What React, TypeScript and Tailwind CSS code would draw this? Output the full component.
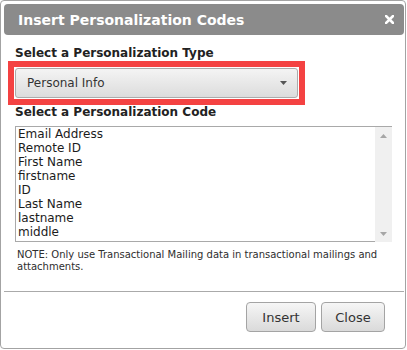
const codes = [
  "Email Address",
  "Remote ID",
  "First Name",
  "firstname",
  "ID",
  "Last Name",
  "lastname",
  "middle",
];

function Caret({ className }: { className: string }) {
  return (
    <svg width="7" height="4" viewBox="0 0 7 4" className={className} aria-hidden="true">
      <polygon points="0,0 7,0 3.5,4" fill="currentColor" />
    </svg>
  );
}

function Boton({ children, width }: { children: string; width: string }) {
  return (
    <button
      type="button"
      className={`${width} h-[30px] rounded-[4px] border border-[#a4a4a4] bg-gradient-to-b from-[#f6f6f6] to-[#dadada] text-[13px] leading-none text-[#333]`}
    >
      {children}
    </button>
  );
}

export default function App() {
  return (
    <div className="h-[350px] w-[407px] bg-white font-['DejaVu_Sans',Verdana,sans-serif]">
      <div className="flex h-[349px] w-[406px] flex-col rounded-[4px] border border-[#a3a3a3] pl-[3px] pr-[1px] pt-[3px]">
        {/* barra de título */}
        <div className="flex h-[31px] items-center justify-between rounded-[4px] bg-[#8b8b8b] pl-[14px] pr-[10px]">
          <h1 className="text-[14px] font-bold leading-none text-white">Insert Personalization Codes</h1>
          <svg width="9" height="9" viewBox="0 0 9 9" aria-hidden="true">
            <path d="M1 1 L8 8 M8 1 L1 8" stroke="white" strokeWidth="2.6" strokeLinecap="square" />
          </svg>
        </div>

        <div className="flex flex-col pl-[11px] pr-[10px] pt-[11px]">
          <p className="text-[12px] font-bold leading-[14px] text-[#222]">Select a Personalization Type</p>

          {/* marco rojo de resaltado */}
          <div className="-ml-[7px] mt-[1px] w-[297px] border-[6px] border-[#f44242] p-[1px]">
            <div className="flex h-[30px] items-center justify-between rounded-[3px] border border-[#ababab] bg-gradient-to-b from-[#f4f4f4] to-[#dcdcdc] pl-[11px] pr-[10px] text-[12px] text-[#333]">
              <span>Personal Info</span>
              <Caret className="text-[#555]" />
            </div>
          </div>

          <p className="text-[12px] font-bold leading-[14px] text-[#222]">Select a Personalization Code</p>

          <div className="mt-[7px] flex h-[116px] w-[377px]">
            <ul className="flex-1 border-y border-l border-[#a9a9a9] pl-[2px] text-[12px] leading-[14px] text-[#1c1c1c]">
              {codes.map((code) => (
                <li key={code}>{code}</li>
              ))}
            </ul>
            <div className="flex w-[17px] flex-col items-center justify-between border-t border-[#a9a9a9] bg-[#f0f0f0] pb-[6px] pt-[7px]">
              <Caret className="rotate-180 text-[#a6a6a6]" />
              <Caret className="text-[#a6a6a6]" />
            </div>
          </div>

          <p className="mt-[7px] pl-[2px] text-[10px] leading-[12px] text-[#2e2e2e]">
            NOTE: Only use Transactional Mailing data in transactional mailings and attachments.
          </p>
        </div>

        <div className="mt-[18px] h-px bg-[#aaaaaa]" />

        <div className="flex justify-end gap-[5px] pr-[19px] pt-[10px]">
          <Boton width="w-[70px]">Insert</Boton>
          <Boton width="w-[64px]">Close</Boton>
        </div>
      </div>
    </div>
  );
}
